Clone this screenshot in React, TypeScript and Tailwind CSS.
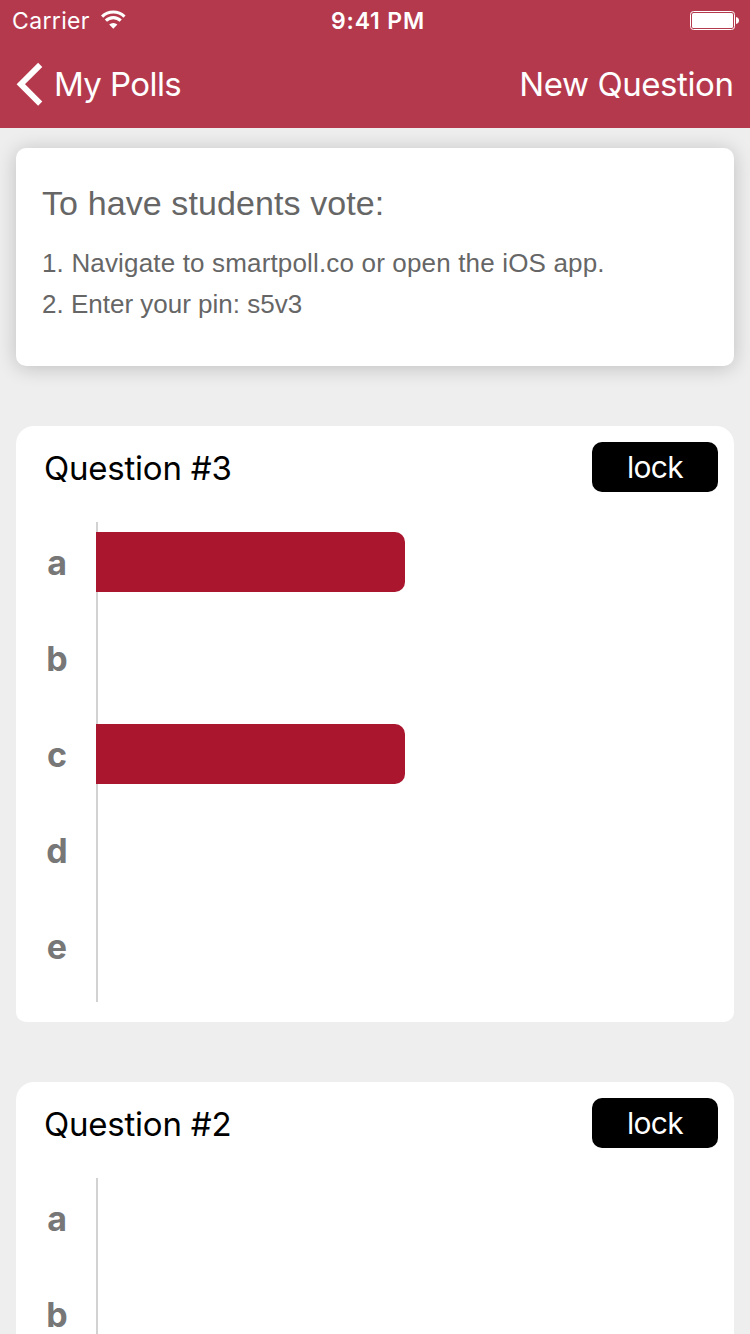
type Poll = { id: number; votes: { option: string; share: number }[] };

const polls: Poll[] = [
  {
    id: 3,
    votes: [
      { option: "a", share: 309 },
      { option: "b", share: 0 },
      { option: "c", share: 309 },
      { option: "d", share: 0 },
      { option: "e", share: 0 },
    ],
  },
  {
    id: 2,
    votes: [
      { option: "a", share: 0 },
      { option: "b", share: 0 },
    ],
  },
];

function WifiIcon() {
  return (
    <svg width="25" height="20" viewBox="0 0 25 20" className="ml-[11px]" fill="none" stroke="white">
      <path d="M1.1 6.6A16 16 0 0 1 23.5 6.6" strokeWidth="3.1" />
      <path d="M4.9 10.7A10.5 10.5 0 0 1 19.7 10.7" strokeWidth="3.1" />
      <path d="M12.3 18.7L8.2 14.6A5.8 5.8 0 0 1 16.4 14.6Z" fill="white" stroke="none" />
    </svg>
  );
}

function BatteryIcon() {
  return (
    <svg width="50" height="20" viewBox="0 0 50 20" fill="none">
      <rect x="0.5" y="1.5" width="44" height="18" rx="3" stroke="white" />
      <rect x="2" y="3" width="41" height="15" rx="1.5" fill="white" />
      <path d="M46 7q3 .6 3 3.5t-3 3.5z" fill="white" />
    </svg>
  );
}

function Header() {
  return (
    <header className="h-32 shrink-0 bg-[#b5394d] text-white">
      <div className="grid h-10 grid-cols-3">
        <div className="flex h-10 items-center pl-[12px] text-[23px] tracking-[0.35px]">
          <span className="h-10 pt-[1px] leading-10">Carrier</span>
          <WifiIcon />
        </div>
        <div className="h-10 pt-[1px] pl-[6px] text-center text-[23px] leading-10 font-semibold tracking-[0.85px]">
          9:41 PM
        </div>
        <div className="flex h-10 items-center justify-end pr-[10px]">
          <BatteryIcon />
        </div>
      </div>
      <div className="flex h-[88px] items-center justify-between pr-[17px] pl-4 text-[33px] leading-[88px]">
        <div className="flex items-center">
          <svg width="28" height="44" viewBox="0 0 28 44" className="mr-[10px]">
            <path d="M24.2 2.8L4.8 22.2L24.2 41.6" fill="none" stroke="white" strokeWidth="5.9" />
          </svg>
          <span className="tracking-[-0.6px]">My Polls</span>
        </div>
        <span className="-mr-[0.5px] tracking-[-0.42px]">New Question</span>
      </div>
    </header>
  );
}

function Instructions() {
  return (
    <section className="h-[218px] rounded-[10px] bg-white pt-8 pl-[26px] font-['Liberation_Sans',Arial,sans-serif] text-[#666666] shadow-[0_2px_20px_rgba(0,0,0,0.2)]">
      <h1 className="text-[34px] leading-[46px] tracking-[0.1px]">To have students vote:</h1>
      <ol className="mt-[17px] text-[26px] leading-[41px]">
        <li className="tracking-[0.16px]">1. Navigate to smartpoll.co or open the iOS app.</li>
        <li>2. Enter your pin: s5v3</li>
      </ol>
    </section>
  );
}

function PollCard({ poll }: { poll: Poll }) {
  return (
    <section className="h-[596px] shrink-0 rounded-t-[18px] rounded-b-[10px] bg-white">
      <div className="flex h-24 items-start justify-between pt-4 pr-4 pl-7">
        <h2 className="text-[33px] leading-[52px] tracking-[-0.22px] text-black">Question #{poll.id}</h2>
        <button className="h-[50px] w-[126px] rounded-[10px] bg-black text-[30px] leading-[51px] tracking-[-0.7px] text-white">
          lock
        </button>
      </div>
      <div className="flex">
        <div className="w-20 pl-[2px] text-center text-[34px] font-bold text-[#777777]">
          {poll.votes.map((v) => (
            <div key={v.option} className="h-24 leading-[82px]">
              {v.option}
            </div>
          ))}
        </div>
        <div className="h-[480px] w-[2px] bg-[#d2d2d2]" />
        <div className="-ml-[2px] flex flex-col">
          {poll.votes.map((v) => (
            <div key={v.option} className="h-24 pt-[10px]">
              <div className="h-[60px] rounded-r-[10px] bg-[#aa162e]" style={{ width: v.share }} />
            </div>
          ))}
        </div>
      </div>
    </section>
  );
}

export default function App() {
  return (
    <div className="flex h-[1334px] w-[750px] flex-col overflow-hidden bg-[#eeeeee] font-[Inter,sans-serif]">
      <Header />
      <main className="flex flex-col gap-[60px] px-4 pt-5">
        <Instructions />
        {polls.map((poll) => (
          <PollCard key={poll.id} poll={poll} />
        ))}
      </main>
    </div>
  );
}
